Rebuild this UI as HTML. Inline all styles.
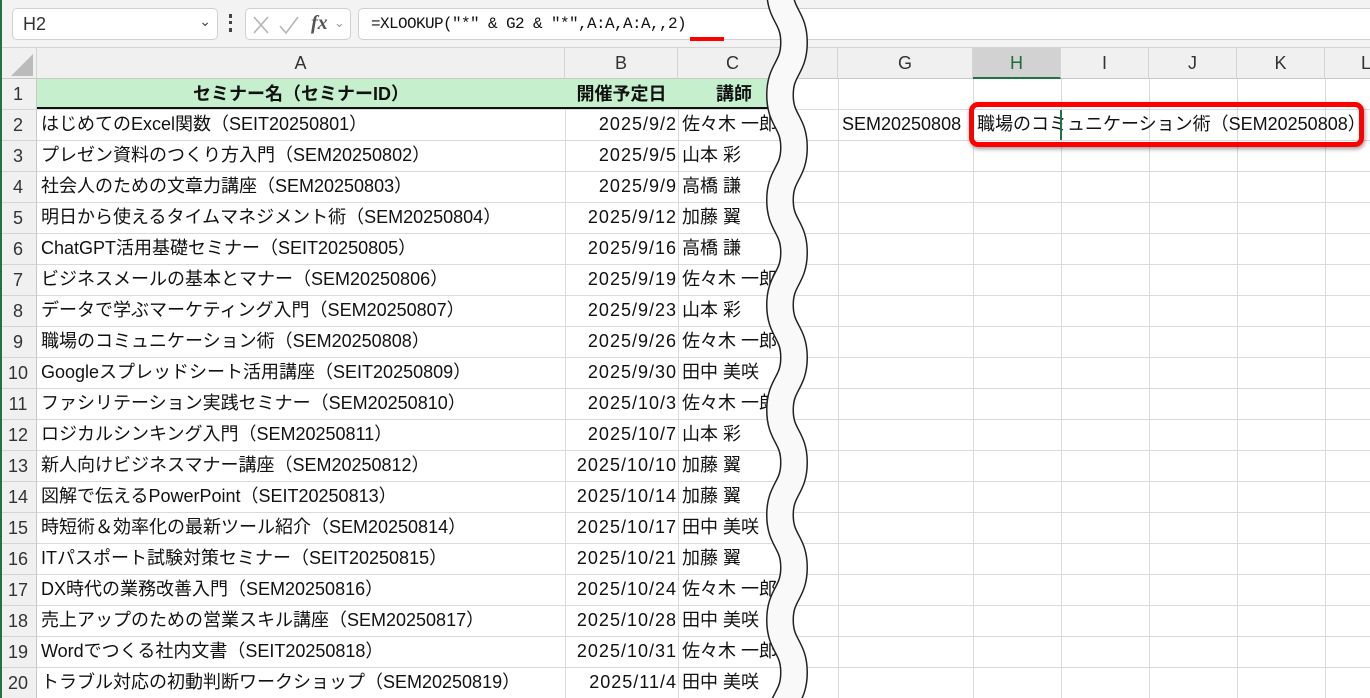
<!DOCTYPE html>
<html><head><meta charset="utf-8"><style>
*{margin:0;padding:0;box-sizing:border-box}
html,body{width:1370px;height:698px;overflow:hidden}
body{background:#fff;font-family:"Liberation Sans","Noto Sans CJK JP",sans-serif;position:relative}
.top{position:absolute;left:0;top:0;width:1370px;height:48px;background:#f3f3f3;border-bottom:1px solid #d4d4d4}
.box{position:absolute;background:#fff;border:1px solid #d0d0d0;border-radius:5px}
.ch{position:absolute;top:48px;height:31px;background:#f0f0f0;border-right:1px solid #d4d4d4;border-bottom:1px solid #c8c8c8;color:#333;font-size:18px;text-align:center;line-height:31px}
.rh{position:absolute;left:0;width:37px;height:31px;background:#f0f0f0;border-bottom:1px solid #d4d4d4;border-right:1px solid #c8c8c8;color:#333;font-size:18px;text-align:center;line-height:31px}
.c{position:absolute;height:31px;line-height:31px;font-size:18px;color:#111;white-space:nowrap;overflow:hidden}
.gl{position:absolute;background:#dadada}
</style></head><body>
<div class="top"></div>
<div class="box" style="left:12px;top:8px;width:206px;height:32px"><span style="position:absolute;left:10px;top:5px;font-size:18px;color:#333">H2</span><span style="position:absolute;right:6px;top:4px;font-size:14px;color:#444">&#8964;</span></div>
<div style="position:absolute;left:229px;top:14px;width:3px;height:18px;border-left:3px dotted #444"></div>
<div class="box" style="left:245px;top:8px;width:106px;height:32px">
<svg width="106" height="32" style="position:absolute;left:0;top:0"><path d="M8,8 L22,24 M22,8 L8,24" stroke="#b5b5b5" stroke-width="1.6" fill="none"/><path d="M34,17 L40,24 L52,8" stroke="#b5b5b5" stroke-width="1.6" fill="none"/></svg>
<span style="position:absolute;left:65px;top:3px;font-size:20px;font-family:'Liberation Serif',serif;font-style:italic;font-weight:bold;color:#555">fx</span><span style="position:absolute;left:88px;top:6px;font-size:13px;color:#999">&#8964;</span></div>
<div class="box" style="left:358px;top:8px;width:1030px;height:32px"><span style="position:absolute;left:12px;top:6px;font-size:16px;font-family:'Liberation Mono',monospace;color:#111;letter-spacing:-0.6px">=XLOOKUP("*" &amp; G2 &amp; "*",A:A,A:A,,2)</span></div>
<div style="position:absolute;left:690px;top:37px;width:34px;height:4px;background:#f00"></div>

<div class="ch" style="left:0;width:37px;background:#f0f0f0"><svg width="30" height="28" style="position:absolute;left:5px;top:2px"><polygon points="28,4 28,26 6,26" fill="#bbb"/></svg></div>
<div class="ch" style="left:37px;width:528px">A</div>
<div class="ch" style="left:565px;width:113px">B</div>
<div class="ch" style="left:678px;width:160px;text-align:left;padding-left:48px">C</div>
<div class="ch" style="left:838px;width:135px">G</div>
<div class="ch" style="left:973px;width:88px;background:#d2d2d2;border-bottom:2px solid #217346;color:#1e6b3e">H</div>
<div class="ch" style="left:1061px;width:88px">I</div>
<div class="ch" style="left:1149px;width:88px">J</div>
<div class="ch" style="left:1237px;width:88px">K</div>
<div class="ch" style="left:1325px;width:60px;text-align:left;padding-left:36px">L</div>

<div id="grid"></div>
<div style="position:absolute;left:37px;top:79px;width:740px;height:30px;background:#c6efce;border-bottom:2px solid #111"></div>
<div class="c" style="left:37px;top:79px;width:528px;text-align:center;font-weight:bold">セミナー名（セミナーID）</div>
<div class="c" style="left:565px;top:79px;width:113px;text-align:center;font-weight:bold">開催予定日</div>
<div class="c" style="left:678px;top:79px;width:110px;padding-left:38px;font-weight:bold">講師</div>
<div style="position:absolute;left:0;top:0;width:2px;height:698px;background:#217346"></div>

<div class="c" style="left:842px;top:109px">SEM20250808</div>
<div class="c" style="left:977px;top:109px">職場のコミュニケーション術（SEM20250808）</div>
<div style="position:absolute;left:1060px;top:110px;width:2px;height:30px;background:#217346"></div>
<div style="position:absolute;left:969px;top:102px;width:395px;height:45px;border:5px solid #f00;border-radius:9px;box-shadow:1px 2px 4px rgba(0,0,0,.4)"></div>

<svg width="1370" height="698" style="position:absolute;left:0;top:0">
<defs><path id="w" d="M780,-10 c0,26 14,26.5 14,52.5 s-14,26.5 -14,52.5 s14,26.5 14,52.5 s-14,26.5 -14,52.5 s14,26.5 14,52.5 s-14,26.5 -14,52.5 s14,26.5 14,52.5 s-14,26.5 -14,52.5 s14,26.5 14,52.5 s-14,26.5 -14,52.5 s14,26.5 14,52.5 s-14,26.5 -14,52.5 s14,26.5 14,52.5 s-14,26.5 -14,52.5 s14,26.5 14,52.5"/></defs>
<use href="#w" fill="none" stroke="#222" stroke-width="28"/>
<use href="#w" fill="none" stroke="#f9f9f9" stroke-width="25"/>
</svg>
<script>
var rows=[
["はじめてのExcel関数（SEIT20250801）","2025/9/2","佐々木 一郎"],
["プレゼン資料のつくり方入門（SEM20250802）","2025/9/5","山本 彩"],
["社会人のための文章力講座（SEM20250803）","2025/9/9","高橋 謙"],
["明日から使えるタイムマネジメント術（SEM20250804）","2025/9/12","加藤 翼"],
["ChatGPT活用基礎セミナー（SEIT20250805）","2025/9/16","高橋 謙"],
["ビジネスメールの基本とマナー（SEM20250806）","2025/9/19","佐々木 一郎"],
["データで学ぶマーケティング入門（SEM20250807）","2025/9/23","山本 彩"],
["職場のコミュニケーション術（SEM20250808）","2025/9/26","佐々木 一郎"],
["Googleスプレッドシート活用講座（SEIT20250809）","2025/9/30","田中 美咲"],
["ファシリテーション実践セミナー（SEM20250810）","2025/10/3","佐々木 一郎"],
["ロジカルシンキング入門（SEM20250811）","2025/10/7","山本 彩"],
["新人向けビジネスマナー講座（SEM20250812）","2025/10/10","加藤 翼"],
["図解で伝えるPowerPoint（SEIT20250813）","2025/10/14","加藤 翼"],
["時短術＆効率化の最新ツール紹介（SEM20250814）","2025/10/17","田中 美咲"],
["ITパスポート試験対策セミナー（SEIT20250815）","2025/10/21","加藤 翼"],
["DX時代の業務改善入門（SEM20250816）","2025/10/24","佐々木 一郎"],
["売上アップのための営業スキル講座（SEM20250817）","2025/10/28","田中 美咲"],
["Wordでつくる社内文書（SEIT20250818）","2025/10/31","佐々木 一郎"],
["トラブル対応の初動判断ワークショップ（SEM20250819）","2025/11/4","田中 美咲"]];
var h='';
for(var i=0;i<20;i++){var t=79+i*31;h+='<div class="rh" style="top:'+t+'px">'+(i+1)+'</div>';h+='<div class="gl" style="left:37px;top:'+(t+30)+'px;width:1333px;height:1px"></div>';}
[565,678,838,973,1061,1149,1237,1325].forEach(function(x){h+='<div class="gl" style="left:'+x+'px;top:79px;width:1px;height:619px"></div>';});
for(var i=0;i<rows.length;i++){var t=109+i*31;
h+='<div class="c" style="left:41px;top:'+t+'px;width:522px">'+rows[i][0]+'</div>';
h+='<div class="c" style="left:565px;top:'+t+'px;width:112px;text-align:right;letter-spacing:1px">'+rows[i][1]+'</div>';
h+='<div class="c" style="left:682px;top:'+t+'px;width:100px">'+rows[i][2]+'</div>';}
document.getElementById('grid').innerHTML=h;
</script>
</body></html>
